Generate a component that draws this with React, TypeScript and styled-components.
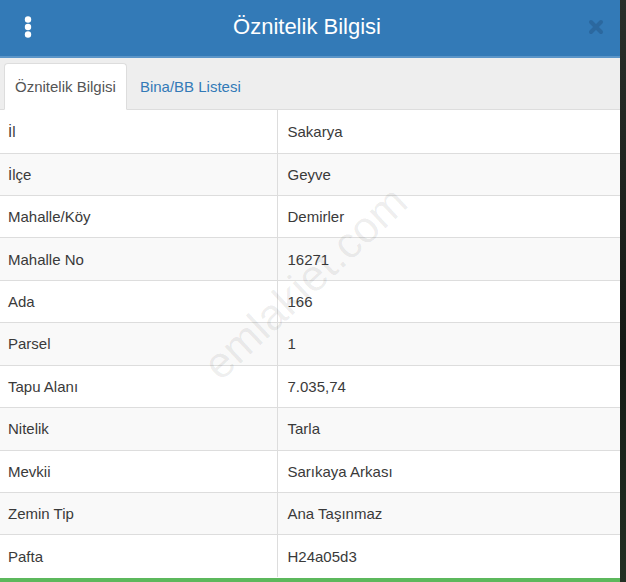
import React from 'react'
import styled, { createGlobalStyle } from 'styled-components'

const GlobalStyle = createGlobalStyle`
  html, body {
    margin: 0;
    padding: 0;
    background: #1c221c;
  }
  body {
    font-family: "Liberation Sans", Arial, sans-serif;
    color: #333;
  }
`

const rows: [string, string][] = [
  ['İl', 'Sakarya'],
  ['İlçe', 'Geyve'],
  ['Mahalle/Köy', 'Demirler'],
  ['Mahalle No', '16271'],
  ['Ada', '166'],
  ['Parsel', '1'],
  ['Tapu Alanı', '7.035,74'],
  ['Nitelik', 'Tarla'],
  ['Mevkii', 'Sarıkaya Arkası'],
  ['Zemin Tip', 'Ana Taşınmaz'],
  ['Pafta', 'H24a05d3'],
]

const App = () => {
  return (
    <>
      <GlobalStyle />
      <Page>
        <Panel>
          <Header>
            <MenuButton aria-label="menu">
              <svg width="8" height="24" viewBox="0 0 8 24">
                <circle cx="4" cy="4.5" r="3.2" fill="#fff" />
                <circle cx="4" cy="12" r="3.2" fill="#fff" />
                <circle cx="4" cy="19.5" r="3.2" fill="#fff" />
              </svg>
            </MenuButton>
            <Title>Öznitelik Bilgisi</Title>
            <CloseButton aria-label="kapat">
              <svg width="16" height="16" viewBox="0 0 16 16">
                <path d="M3 3 L13 13 M13 3 L3 13" stroke="#2b679d" strokeWidth="4" strokeLinecap="round" />
              </svg>
            </CloseButton>
          </Header>
          <Tabs>
            <Tab active>Öznitelik Bilgisi</Tab>
            <Tab>Bina/BB Listesi</Tab>
          </Tabs>
          <Body>
            <Table>
              <colgroup>
                <col style={{ width: 277 }} />
                <col />
              </colgroup>
              <tbody>
                {rows.map(([label, value], i) => (
                  <Row key={label} striped={i % 2 === 1}>
                    <Cell first={i === 0}>{label}</Cell>
                    <Cell first={i === 0} divider>{value}</Cell>
                  </Row>
                ))}
              </tbody>
            </Table>
            <Watermark>emlakiet.com</Watermark>
          </Body>
          <Footer />
        </Panel>
      </Page>
    </>
  )
}

const Page = styled.div`
  width: 626px;
  height: 582px;
  overflow: hidden;
  background: linear-gradient(180deg, #2a2f2a 0%, #151a15 60%, #233023 100%);
`

const Panel = styled.div`
  width: 620px;
  height: 582px;
  background: #fff;
  display: flex;
  flex-direction: column;
`

const Header = styled.div`
  height: 58px;
  flex-shrink: 0;
  background: #337ab7;
  display: flex;
  align-items: center;
  justify-content: space-between;
  padding: 0 16px 0 24px;
  border-bottom: 2px solid #5b95c8;
  box-sizing: border-box;
`

const MenuButton = styled.div`
  width: 8px;
  height: 24px;
  display: flex;
  margin-top: -2px;
`

const Title = styled.div`
  flex: 1;
  text-align: center;
  color: #fff;
  font-size: 22px;
  margin-top: -2px;
  padding-right: 6px;
`

const CloseButton = styled.div`
  width: 16px;
  height: 16px;
  display: flex;
  margin-top: -2px;
  opacity: 0.9;
`

const Tabs = styled.div`
  height: 52px;
  flex-shrink: 0;
  background: #eee;
  border-bottom: 1px solid #ddd;
  box-sizing: border-box;
  display: flex;
  align-items: flex-end;
  padding-left: 4px;
`

const Tab = styled.div<{ active?: boolean }>`
  height: 47px;
  box-sizing: border-box;
  padding: 0 10px;
  margin-bottom: -1px;
  display: flex;
  align-items: center;
  font-size: 15px;
  border: 1px solid ${p => (p.active ? '#ddd' : 'transparent')};
  border-bottom-color: ${p => (p.active ? '#fff' : 'transparent')};
  border-radius: 4px 4px 0 0;
  background: ${p => (p.active ? '#fff' : 'transparent')};
  color: ${p => (p.active ? '#555' : '#337ab7')};
  margin-right: 2px;
`

const Body = styled.div`
  position: relative;
  flex: 1;
  overflow: hidden;
`

const Table = styled.table`
  width: 100%;
  border-collapse: collapse;
  table-layout: fixed;
  font-size: 15px;
`

const Row = styled.tr<{ striped?: boolean }>`
  background: ${p => (p.striped ? '#f9f9f9' : '#fff')};
`

const Cell = styled.td<{ divider?: boolean; first?: boolean }>`
  height: ${p => (p.first ? '43px' : '42.45px')};
  box-sizing: border-box;
  padding: 1px 8px 0 ${p => (p.divider ? '10px' : '8px')};
  color: #3a3a3a;
  line-height: 20px;
  vertical-align: middle;
  border-top: ${p => (p.first ? 'none' : '1px solid #ddd')};
  border-left: ${p => (p.divider ? '1px solid #ddd' : 'none')};
  white-space: nowrap;
`

const Watermark = styled.div`
  position: absolute;
  left: 305px;
  top: 173px;
  transform: translate(-50%, -50%) rotate(-43deg);
  font-size: 44px;
  color: rgba(0, 0, 0, 0.07);
  white-space: nowrap;
  pointer-events: none;
`

const Footer = styled.div`
  height: 4px;
  flex-shrink: 0;
  background: #5cb85c;
`

export default App
